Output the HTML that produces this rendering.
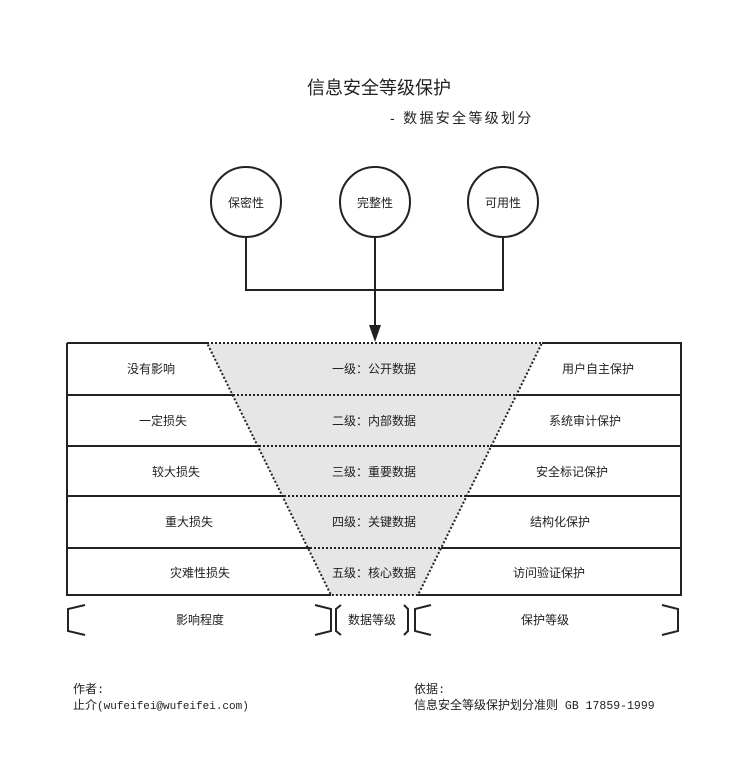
<!DOCTYPE html>
<html><head><meta charset="utf-8"><style>
html,body{margin:0;padding:0;background:#fff;width:741px;height:779px;overflow:hidden}
svg text{font-family:"Liberation Sans","Noto Sans CJK SC",sans-serif;fill:#222}
svg text.m{font-family:"Liberation Mono","Noto Sans CJK SC",monospace}
</style></head><body>
<svg width="741" height="779" viewBox="0 0 741 779" xmlns="http://www.w3.org/2000/svg">
<text x="379" y="94" font-size="18" text-anchor="middle">信息安全等级保护</text>
<text x="390" y="123" font-size="14" letter-spacing="2.3">-  数据安全等级划分</text>
<g fill="#fff" stroke="#222" stroke-width="2">
<circle cx="246" cy="202" r="35"/><circle cx="375" cy="202" r="35"/><circle cx="503" cy="202" r="35"/>
</g>
<g font-size="12" text-anchor="middle">
<text x="246" y="207">保密性</text><text x="375" y="207">完整性</text><text x="503" y="207">可用性</text>
</g>
<g stroke="#222" stroke-width="2" fill="none">
<path d="M246 237V290H503V237M375 237V326"/>
</g>
<path d="M369 325L381 325L375 342Z" fill="#222"/>
<path d="M207 343L542 343L418 595L331 595Z" fill="#e6e6e6"/>
<g stroke="#222" stroke-width="2" fill="none">
<path d="M67 343H207M542 343H681V595H418M331 595H67V343"/>
<path d="M67 395H233M516 395H681M67 446H259M490 446H681M67 496H284M465 496H681M67 548H310M441 548H681"/>
</g>
<g stroke="#222" stroke-width="2" fill="none" stroke-dasharray="2 2">
<path d="M207 343H542L418 595H331Z"/>
<path d="M233 395H516M259 446H490M284 496H465M310 548H441"/>
</g>
<g font-size="12" text-anchor="middle">
<text x="151" y="373">没有影响</text><text x="163" y="425">一定损失</text><text x="176" y="476">较大损失</text><text x="189" y="526">重大损失</text><text x="200" y="577">灾难性损失</text>
<text x="374" y="373">一级：公开数据</text><text x="374" y="425">二级：内部数据</text><text x="374" y="476">三级：重要数据</text><text x="374" y="526">四级：关键数据</text><text x="374" y="577">五级：核心数据</text>
<text x="598" y="373">用户自主保护</text><text x="585" y="425">系统审计保护</text><text x="572" y="476">安全标记保护</text><text x="560" y="526">结构化保护</text><text x="549" y="577">访问验证保护</text>
<text x="200" y="624">影响程度</text><text x="372" y="624">数据等级</text><text x="545" y="624">保护等级</text>
</g>
<g stroke="#222" stroke-width="2" fill="none">
<path d="M85 605L68 609V631L85 635"/>
<path d="M315 605L331 609V631L315 635"/>
<path d="M341 605L336 609V631L341 635"/>
<path d="M404 605L408 609V631L404 635"/>
<path d="M431 605L415 609V631L431 635"/>
<path d="M662 605L678 609V631L662 635"/>
</g>
<g font-size="12">
<text class="m" x="73" y="693">作者:</text>
<text class="m" x="73" y="709">止介<tspan font-size="11">(wufeifei@wufeifei.com)</tspan></text>
<text class="m" x="414" y="693">依据:</text>
<text class="m" x="414" y="709">信息安全等级保护划分准则<tspan font-size="11.5"> GB 17859-1999</tspan></text>
</g>
</svg>
</body></html>
